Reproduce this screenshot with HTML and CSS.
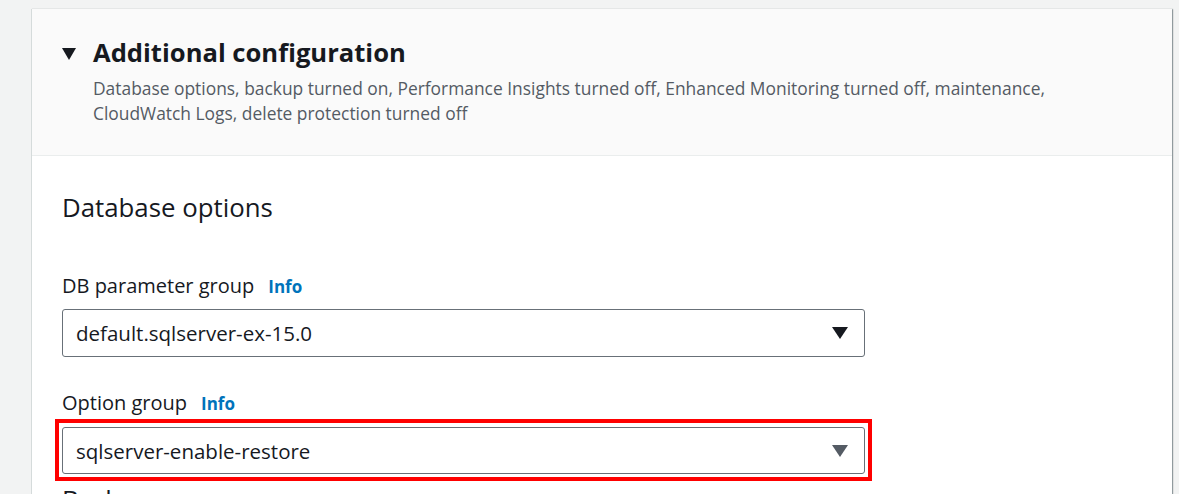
FILE: index.html
```html
<!DOCTYPE html>
<html>
<head>
<meta charset="utf-8">
<link rel="stylesheet" href="styles.css">
</head>
<body>
<div class="page">
  <div class="card">
    <div class="card-header">
      <div class="title-row">
        <span class="caret"></span>
        <h2 class="title">Additional configuration</h2>
      </div>
      <p class="desc">Database options, backup turned on, Performance Insights turned off, Enhanced Monitoring turned off, maintenance, CloudWatch Logs, delete protection turned off</p>
    </div>
    <div class="card-body">
      <h3 class="section">Database options</h3>
      <div class="field">
        <div class="label">DB parameter group <a class="info">Info</a></div>
        <div class="select">
          <span class="value">default.sqlserver-ex-15.0</span>
          <span class="arrow dark"></span>
        </div>
      </div>
      <div class="field second">
        <div class="label">Option group <a class="info">Info</a></div>
        <div class="highlight">
          <div class="select">
            <span class="value">sqlserver-enable-restore</span>
            <span class="arrow grey"></span>
          </div>
        </div>
      </div>
      <h3 class="section next">Backup</h3>
    </div>
  </div>
</div>
</body>
</html>
```
FILE: styles.css
```css
html, body {
  margin: 0;
  padding: 0;
  background: #f2f3f3;
  overflow: hidden;
  height: 494px;
}
.page {
  padding: 9px 7px 0 31px;
  font-family: "Open Sans", "Noto Sans", sans-serif;
  color: #16191f;
}
.card {
  background: #ffffff;
  border-left: 1px solid #d5dbdb;
  box-shadow: 1px 0 1px 0 rgba(0,28,36,0.3), 2px 0 1px -1px rgba(0,28,36,0.15);
  height: 600px;
}
.card-header {
  background: #fafafa;
  border-bottom: 1px solid #eaeded;
  padding: 0 30px;
  box-sizing: border-box;
  height: 147px;
}
.title-row {
  display: flex;
  align-items: center;
  padding-top: 27px;
}
.caret {
  width: 0;
  height: 0;
  border-left: 7px solid transparent;
  border-right: 7px solid transparent;
  border-top: 12px solid #16191f;
  margin-right: 17px;
  margin-top: 2px;
}
.title {
  margin: 0;
  font-size: 25.6px;
  font-weight: 700;
  line-height: 34px;
}
.desc {
  margin: 6px 0 0 31px;
  font-size: 17.4px;
  line-height: 25px;
  color: #545b64;
  max-width: 1010px;
}
.card-body {
  padding: 0 30px;
}
.section {
  margin: 0;
  padding-top: 35px;
  font-size: 25.8px;
  font-weight: 400;
  line-height: 32px;
}
.field {
  margin-top: 50px;
}
.field.second {
  margin-top: 33px;
}
.label {
  font-size: 20px;
  line-height: 26px;
  display: flex;
  align-items: baseline;
}
.info {
  font-size: 17px;
  font-weight: 700;
  color: #0073bb;
  margin-left: 14px;
}
.select {
  box-sizing: border-box;
  width: 803px;
  height: 48px;
  border: 1px solid #687078;
  border-radius: 3px;
  background: #fff;
  display: flex;
  align-items: center;
  justify-content: space-between;
  padding: 0 16px 0 13px;
  margin-top: 9px;
}
.value {
  font-size: 20.5px;
}
.arrow {
  width: 0;
  height: 0;
  border-left: 8px solid transparent;
  border-right: 8px solid transparent;
  border-top: 12px solid #16191f;
}
.arrow.grey {
  border-top-color: #545b64;
}
.highlight {
  width: 817px;
  box-sizing: border-box;
  border: 4px solid #ff0000;
  padding: 4px 3px 3px 3px;
  margin-left: -7px;
  margin-top: 2px;
}
.highlight .select {
  margin-top: 0;
  height: 47px;
}
.section.next {
  padding-top: 2px;
}
```
